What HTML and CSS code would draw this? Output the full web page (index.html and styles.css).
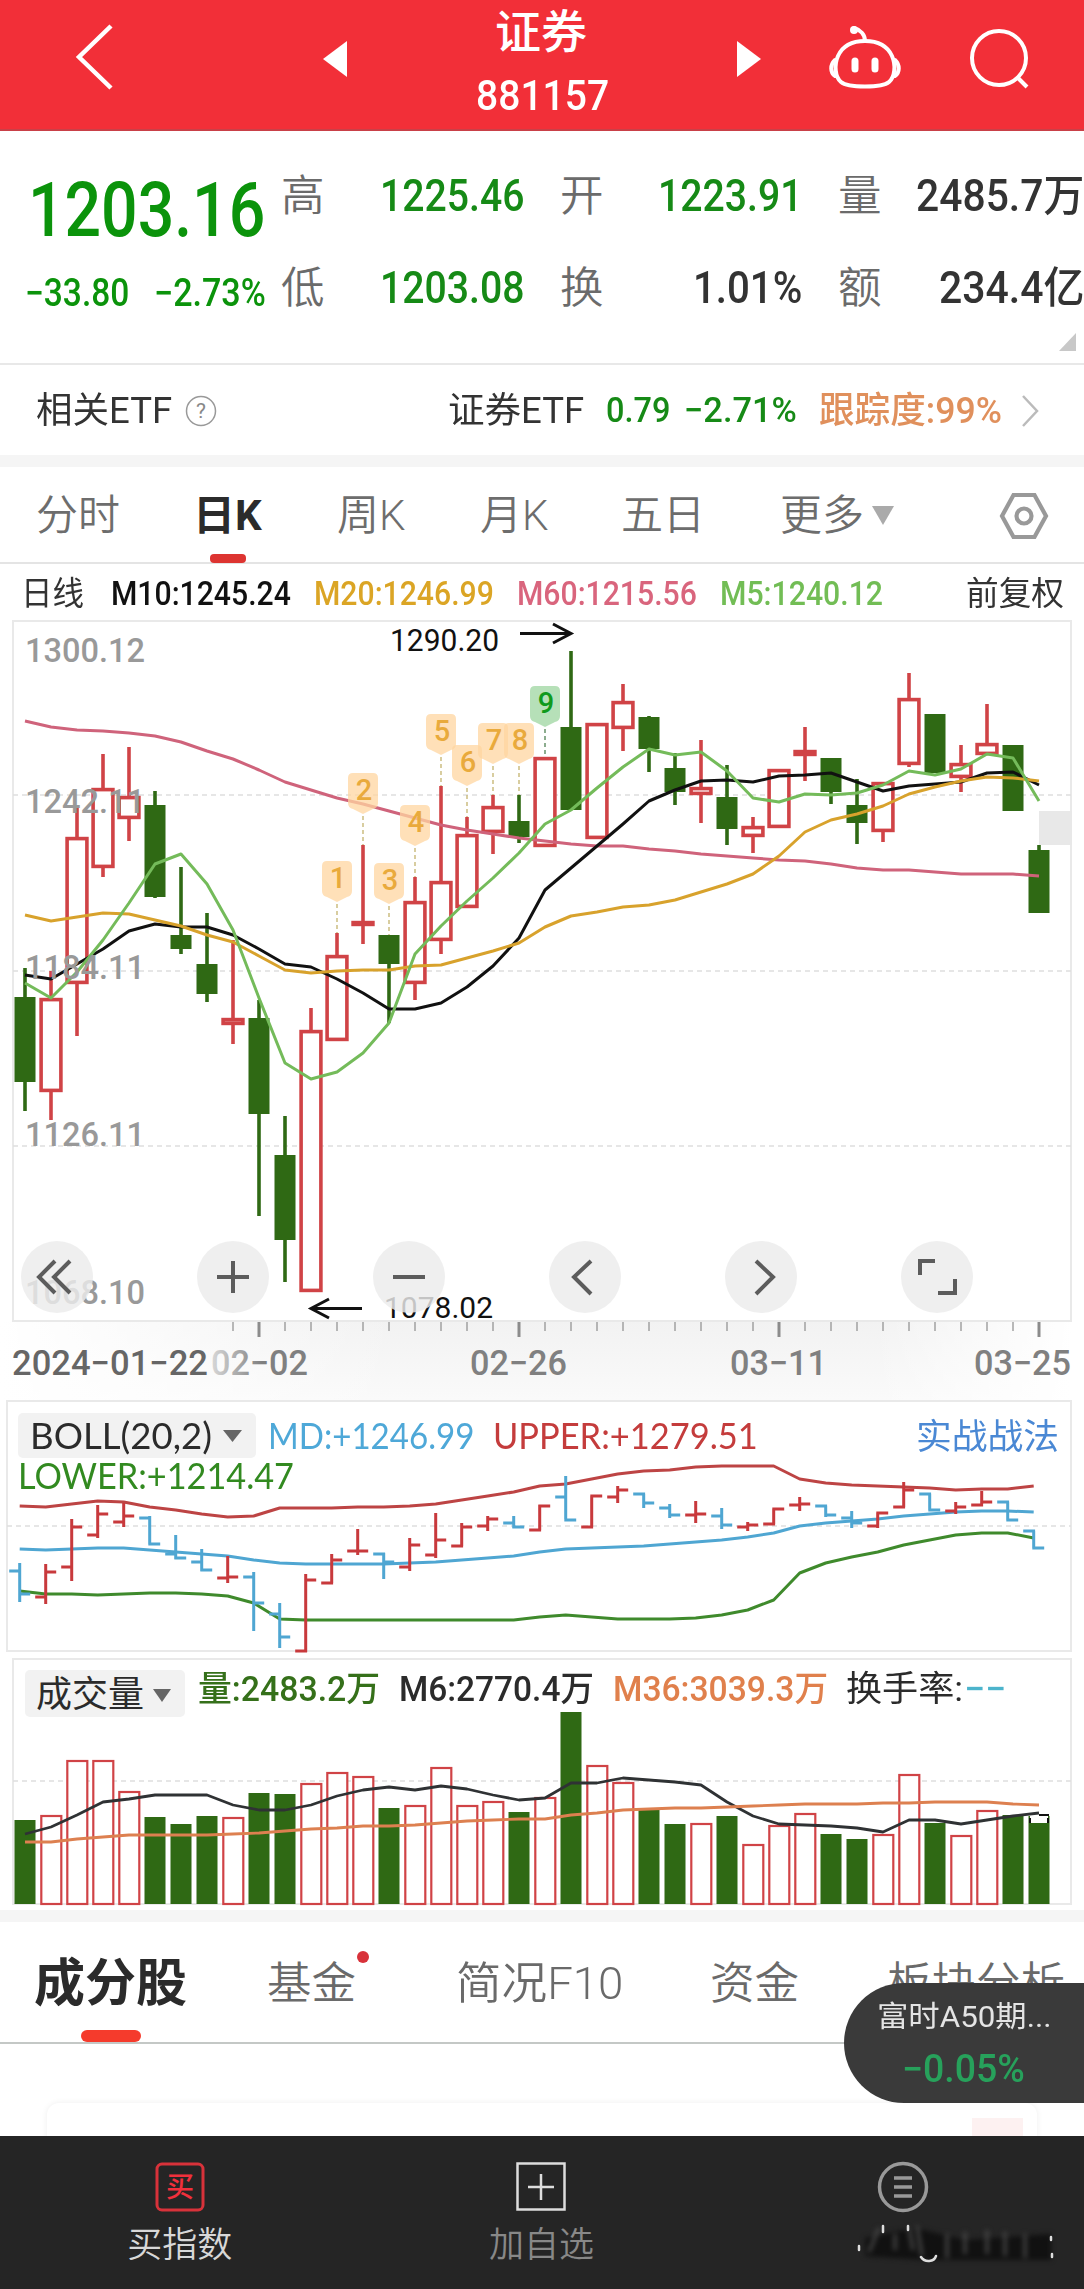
FILE: index.html
```html
<!DOCTYPE html>
<html lang="zh-CN">
<head>
<meta charset="utf-8">
<title>证券 881157</title>
<link rel="stylesheet" href="styles.css">
</head>
<body>
<header class="topbar">
  <svg class="ic-back" width="44" height="70" viewBox="0 0 44 70"><path d="M38 4 6 35 38 66" /></svg>
  <svg class="ic-prev" width="24" height="36" viewBox="0 0 24 36"><path d="M24 0V36L0 18z"/></svg>
  <div class="title">
    <div class="name fit" data-w="92">证券</div>
    <div class="code fit" data-w="133">881157</div>
  </div>
  <svg class="ic-next" width="24" height="36" viewBox="0 0 24 36"><path d="M0 0V36L24 18z"/></svg>
  <svg class="ic-bot" width="72" height="68" viewBox="0 0 72 68">
    <path d="M36 17C25 17 14 21 9 32 5 41 6 53 12 58 19 64 53 64 60 58 66 53 67 41 63 32 58 21 47 17 36 17z"/>
    <path d="M36 17C36 11 32 6 25 4M6 36C1 41 1 48 6 52M66 36C71 41 71 48 66 52"/>
    <path class="eyes" d="M26 37V45M46 37V45"/>
    <circle class="tip" cx="25" cy="6" r="4"/>
  </svg>
  <svg class="ic-search" width="64" height="64" viewBox="0 0 64 64"><circle cx="31" cy="31" r="27"/><path d="M50 51 59 60"/></svg>
</header>

<section class="quote">
  <div class="last">
    <div class="price fit" data-w="237">1203.16</div>
    <div class="chg"><span class="fit" data-w="104">−33.80</span><span class="fit" data-w="112">−2.73%</span></div>
  </div>
  <div class="stats">
    <span>高</span><b class="dn"><i class="fit" data-w="144">1225.46</i></b>
    <span>开</span><b class="dn"><i class="fit" data-w="144">1223.91</i></b>
    <span>量</span><b><i class="fit" data-w="168">2485.7万</i></b>
    <span>低</span><b class="dn"><i class="fit" data-w="144">1203.08</i></b>
    <span>换</span><b><i class="fit" data-w="109">1.01%</i></b>
    <span>额</span><b><i class="fit" data-w="145">234.4亿</i></b>
  </div>
  <svg class="fold" width="17" height="18" viewBox="0 0 17 18"><path d="M17 0V18H0z"/></svg>
</section>

<section class="etf">
  <span class="fit" data-w="136">相关ETF</span>
  <svg width="32" height="32" viewBox="0 0 32 32"><circle cx="16" cy="16" r="14.5"/><text x="16" y="23" text-anchor="middle">?</text></svg>
  <span class="fit" data-w="136">证券ETF</span>
  <b class="fit" data-w="64">0.79</b>
  <b class="fit" data-w="113">−2.71%</b>
  <em class="fit" data-w="183">跟踪度:99%</em>
  <svg class="go" width="20" height="34" viewBox="0 0 20 34"><path d="M3 2 17 17 3 32"/></svg>
</section>

<nav class="periods">
  <span>分时</span>
  <span class="on">日K</span>
  <span>周K</span>
  <span>月K</span>
  <span>五日</span>
  <span>更多</span>
  <svg class="more" width="22" height="19" viewBox="0 0 22 19"><path d="M0 0H22L11 19z"/></svg>
  <svg class="gear" width="50" height="48" viewBox="0 0 50 48"><path d="M14.500 3H35.500L47 24 35.500 45H14.500L3 24z"/><circle cx="25" cy="24" r="7.500"/></svg>
</nav>

<section class="ma">
  <span class="fit" data-w="63">日线</span>
  <span class="fit c10" data-w="180">M10:1245.24</span>
  <span class="fit c20" data-w="180">M20:1246.99</span>
  <span class="fit c60" data-w="180">M60:1215.56</span>
  <span class="fit c5" data-w="163">M5:1240.12</span>
  <span class="fit" data-w="98">前复权</span>
</section>

<section class="panel kline">
  <svg id="kline" width="1084" height="780" viewBox="0 620 1084 780"></svg>
  <div class="tools">
    <svg viewBox="0 0 72 72"><path d="M34 20 18 36 34 52M49 20 33 36 49 52"/></svg>
    <svg viewBox="0 0 72 72"><path d="M36 20V52M20 36H52"/></svg>
    <svg viewBox="0 0 72 72"><path d="M20 36H52"/></svg>
    <svg viewBox="0 0 72 72"><path d="M42 20 25 36 42 53"/></svg>
    <svg viewBox="0 0 72 72"><path d="M31 20 48 36 31 53"/></svg>
    <svg viewBox="0 0 72 72"><path d="M19 34V20H34M54 38V52H37"/></svg>
  </div>
</section>

<section class="panel">
  <svg id="boll" width="1084" height="256" viewBox="0 1400 1084 256"></svg>
  <div class="legend boll-legend">
    <div class="select"><span class="fit" data-w="182">BOLL(20,2)</span><svg width="19" height="12" viewBox="0 0 19 12"><path d="M0 0H19L9.500 12z"/></svg></div>
    <span class="fit md" data-w="206">MD:+1246.99</span>
    <span class="fit up" data-w="265">UPPER:+1279.51</span>
    <span class="fit tip" data-w="143">实战战法</span>
    <span class="fit low" data-w="276">LOWER:+1214.47</span>
  </div>
</section>

<section class="panel">
  <svg id="vol" width="1084" height="254" viewBox="0 1656 1084 254"></svg>
  <div class="legend vol-legend">
    <div class="select"><span class="fit" data-w="108">成交量</span><svg width="18" height="13" viewBox="0 0 18 13"><path d="M0 0H18L9 13z"/></svg></div>
    <span class="fit v" data-w="182">量:2483.2万</span>
    <span class="fit" data-w="195">M6:2770.4万</span>
    <span class="fit m36" data-w="215">M36:3039.3万</span>
    <span class="fit" data-w="117">换手率:</span>
    <span class="fit dash" data-w="42">−−</span>
  </div>
</section>

<nav class="sections">
  <span class="on">成分股</span>
  <span class="dot">基金</span>
  <span class="fit" data-w="167">简况F10</span>
  <span>资金</span>
  <span>板块分析</span>
</nav>

<section class="body"><div class="card"><i></i></div></section>

<aside class="float"><span class="fit" data-w="174">富时A50期...</span><b class="fit" data-w="123">−0.05%</b></aside>

<footer class="tabbar">
  <div class="buy"><svg width="50" height="52" viewBox="0 0 50 52"><rect x="2" y="3" width="46" height="46" rx="5"/><text x="25" y="36" text-anchor="middle">买</text></svg><span>买指数</span></div>
  <div class="add"><svg width="50" height="52" viewBox="0 0 50 52"><rect x="1.500" y="2.500" width="47" height="46"/><path d="M25 13V39M12 26H38"/></svg><span>加自选</span></div>
  <div class="fn"><svg width="52" height="52" viewBox="0 0 52 52"><circle cx="26" cy="26" r="23.500"/><path d="M17 17H35M17 26H35M17 35H35"/></svg>
    <svg class="smudge" width="206" height="50" viewBox="0 0 206 50">
      <g class="soft"><path class="k" d="M10 18 60 8 110 20 196 14V40H70L10 36z"/><path class="g" d="M14 32 24 8M54 8 58 30M62 6 67 36M40 14V30M92 14V38M132 10V34M150 12V36M170 14V38M110 12V34"/></g>
      <path class="w" d="M4 26V30M28 6V12M53 6V10M66 37C70 43 79 42 81 36M196 17V20M197 34V37"/>
    </svg></div>
</footer>
<script src="charts.js"></script>
</body>
</html>
```
FILE: styles.css
```css
* { box-sizing: border-box; }
body { margin: 0; width: 1084px; height: 2289px; overflow: hidden; position: relative; background: #fff; color: #333; font-family: Roboto, "Noto Sans CJK SC", sans-serif; }
b, i, em { font-weight: inherit; font-style: normal; }
svg { display: block; fill: none; }
.fit { display: inline-block; justify-self: start; white-space: nowrap; transform-origin: 0 50%; }

.topbar { height: 131px; background: #f22f38; border-bottom: 2px solid #c94048; display: grid; grid-template-columns: 324px 152px 133px 128px 94px 139px 1fr; position: relative; color: #fff; }
.topbar svg { stroke: #fff; grid-row: 1; }
.ic-back { grid-column: 1; margin: 22px 0 0 73px; stroke-width: 4.500; }
.topbar .ic-prev, .topbar .ic-next { fill: #fff; stroke: none; margin-top: 41px; }
.ic-prev { grid-column: 1 / 3; margin-left: 323px; }
.title { grid-column: 3; grid-row: 1; }
.name { font-size: 46px; line-height: 64px; font-weight: 500; margin-left: 19px; height: 64px; }
.code { font-size: 42px; line-height: 50px; font-weight: 500; margin-top: 7px; display: block; width: max-content; }
.ic-next { grid-column: 5; }
.ic-bot { grid-column: 5 / 7; margin: 24px 0 0 92px; stroke-width: 4; stroke-linecap: round; }
.eyes { stroke-width: 7; }
.tip { fill: #fff; stroke: none; }
.ic-search { grid-column: 7; margin: 27px 0 0 -2px; stroke-width: 4; }

.quote { height: 234px; border-bottom: 2px solid #e8e8e8; display: flex; position: relative; }
.last { width: 281px; color: #0b930b; padding: 35px 0 0 25px; }
.price { font-size: 76px; line-height: 88px; height: 88px; font-weight: 500; margin-left: 3px; }
.chg { display: grid; grid-template-columns: 129px auto; font-size: 38px; line-height: 50px; margin-top: 14px; font-weight: 500; }
.stats { display: grid; grid-template-columns: 42px 201px 78px 200px 79px 203px; grid-auto-rows: 92px; padding-top: 20px; font-size: 43.500px; line-height: 92px; }
.stats span { color: #6b6b6b; font-weight: 350; }
.stats span:not(:nth-child(6n+1)) { padding-left: 36px; }
.stats b { text-align: right; white-space: nowrap; font-weight: 500; }
.stats b .fit { transform-origin: 100% 50%; }
.stats .dn { color: #168a16; }
.fold { position: absolute; right: 8px; bottom: 12px; fill: #c8c8c8; }

.etf { height: 90px; display: grid; align-items: center; grid-template-columns: 149px 263px 158px 78px 135px 201px 1fr; padding: 1px 0 0 36px; font-size: 36px; line-height: 50px; }
.etf b { color: #168a16; font-weight: 500; font-size: 35px; }
.etf em { color: #e0905c; font-weight: 500; }
.etf svg { stroke: #999; stroke-width: 1.500; }
.etf text { font-size: 21px; fill: #888; stroke: none; }
.etf .go { stroke: #bbb; stroke-width: 2.500; }

.periods { height: 109px; border-top: 12px solid #f5f5f5; border-bottom: 2px solid #e4e4e4; display: grid; grid-template-columns: 157px 144px 143px 141px 159px 92px 127px 1fr; padding: 2px 0 0 36px; align-items: center; font-size: 42px; line-height: 60px; color: #6d6d6d; font-weight: 350; }
.periods .on { color: #2b2b2b; font-weight: 700; position: relative; }
.periods .on::after { content: ""; position: absolute; left: 17px; top: 68px; width: 36px; height: 9px; border-radius: 4px; background: #dd3431; }
.more { fill: #aaa; }
.gear { stroke: #999; stroke-width: 4.200; }

.ma { height: 56px; display: grid; grid-template-columns: 90px 203px 203px 203px 246px 1fr; padding-left: 21px; font-size: 33px; line-height: 60px; font-weight: 400; }
.c10 { color: #111; font-weight: 500; } .c20 { color: #dba525; font-weight: 500; } .c60 { color: #d9657d; font-weight: 500; } .c5 { color: #72bd55; font-weight: 500; }

.panel { position: relative; }
.kline svg { overflow: visible; }
.tools { position: absolute; left: 21px; top: 621px; display: flex; gap: 104px; }
.tools svg { width: 72px; height: 72px; border-radius: 50%; background: rgba(236,236,236,.82); stroke: #5c5c5c; stroke-width: 4; }
.legend { position: absolute; left: 0; top: 0; right: 0; display: grid; align-items: center; }
.boll-legend { grid-template-columns: 250px 225px 423px 1fr; grid-template-rows: 45px 30px; padding: 13px 0 0 18px; font-family: Lato, "Noto Sans CJK SC", sans-serif; font-size: 36px; line-height: 45px; }
.select { background: #f2f2f2; border-radius: 5px; display: flex; align-items: center; height: 100%; color: #2b2b2b; }
.select svg { fill: #666; }
.boll-legend .select { width: 238px; padding-left: 12px; gap: 11px; }
.md { color: #4ea8d8; } .up { color: #c43c3c; } .boll-legend .tip { color: #4a88d4; font-size: 35px; }
.low { color: #328a20; grid-row: 2; grid-column: 1 / 4; margin: 5px 0 0 0; }
.vol-legend { grid-template-columns: 173px 201px 214px 233px 118px 1fr; padding: 14px 0 0 25px; font-size: 35.500px; line-height: 47px; color: #2b2b2b; }
.vol-legend > span { margin-top: -9px; font-weight: 500; }
.vol-legend > span:nth-child(5) { font-weight: 400; }
.vol-legend .select { width: 160px; height: 47px; padding: 4px 0 0 11px; gap: 9px; font-size: 36px; }
.vol-legend .v { color: #35701a; } .vol-legend .m36 { color: #e0804c; } .vol-legend .dash { color: #4cb4cc; }

.sections { height: 134px; border-top: 12px solid #f5f5f5; border-bottom: 2px solid #c4c8c6; display: grid; grid-template-columns: 233px 189px 254px 177px 1fr; padding-left: 34px; font-size: 44.500px; line-height: 124px; color: #6a6a6a; font-weight: 350; white-space: nowrap; }
.sections .on { font-size: 51px; font-weight: 700; color: #2b2b2b; position: relative; }
.sections .on::after { content: ""; position: absolute; left: 47px; top: 108px; width: 60px; height: 12px; border-radius: 6px; background: #f53b2c; }
.dot { position: relative; }
.dot::after { content: ""; position: absolute; left: 90px; top: 29px; width: 12px; height: 12px; border-radius: 50%; background: #d8323a; }

.body { height: 92px; overflow: hidden; padding: 59px 47px 0; }
.card { height: 80px; border-radius: 12px; box-shadow: 0 0 6px rgba(0,0,0,.07); padding: 15px 14px 0; }
.card i { display: block; width: 51px; height: 40px; background: #fdf1f1; margin-left: auto; }
.float { position: absolute; right: 0; top: 1983px; width: 240px; height: 120px; border-radius: 60px 0 0 60px; background: #3a3a3a; color: #e4e4e4; display: grid; grid-template-rows: 66px 42px; font-size: 29px; line-height: 68px; padding-left: 33px; }
.float b { color: #27a15b; font-size: 38px; line-height: 40px; margin-left: 25px; font-weight: 500; }

.tabbar { height: 153px; background: #252525; display: grid; grid-template-columns: repeat(3, 1fr); position: relative; left: -1px; width: 1085px; }
.tabbar > div { display: flex; flex-direction: column; align-items: center; padding-top: 25px; font-size: 35px; line-height: 66px; color: #d8d8d8; font-weight: 350; }
.buy rect { stroke: #d8323a; stroke-width: 3; } .buy text { fill: #f0303c; font-size: 28px; font-weight: 500; }
.add rect, .add path { stroke: #ddd; stroke-width: 2.500; }
.tabbar .add { color: #888; }
.fn circle, .fn > svg:first-child path { stroke: #999; stroke-width: 3.500; }
.smudge { margin: 7px -110px 0 0; }
.soft { filter: blur(2.500px); } .k { fill: #111; } .g { stroke: #4a4a4a; stroke-width: 3; } .w { stroke: #ddd; stroke-width: 2.500; stroke-linecap: round; }

.lab { font-family: Roboto, sans-serif; }
```
FILE: charts.js
```js
// Squeeze each label to its column width.
document.querySelectorAll('.fit').forEach(el => {
  const w = +el.dataset.w, n = el.offsetWidth;
  el.style.transform = `scaleX(${w / n})`;
  if (!el.closest('.stats') && !el.closest('.title')) el.style.marginRight = `${w - n}px`;
});

const RED = '#d04346', GREEN = '#2f6914', BLUE = '#4fa6d2';
const X = i => 25 + 26 * i;
const XB = i => 19.7 + 26 * i;
const line = (x1, y1, x2, y2, c, w = 3, extra = '') => `<path d="M${x1} ${y1}L${x2} ${y2}" stroke="${c}" stroke-width="${w}" ${extra}/>`;
const poly = (ys, c, x = X, w = 3) => `<polyline points="${ys.map((y, i) => x(i) + ',' + y).join(' ')}" stroke="${c}" stroke-width="${w}" stroke-linejoin="round"/>`;
const text = (s, x, base, w, size, c, extra = '') => `<text class="lab" x="${x}" y="${base}" textLength="${w}" lengthAdjust="spacingAndGlyphs" font-size="${size}" fill="${c}" ${extra}>${s}</text>`;
const frame = (x, y, w, h) => `<rect x="${x}" y="${y}" width="${w}" height="${h}" fill="#fff" stroke="#e9e9e9" stroke-width="2"/>`;
const grid = (y, x = 13) => line(x, y, 1071, y, '#dedede', 1.3, 'stroke-dasharray="5 4"');
const medium = 'font-weight="500"';

// direction, high, body top, body bottom, low
const candles = [
  ['G',968,997,1082,1111],['R',971,998,1092,1120],['R',808,837,984,1036],['R',754,788,868,877],['R',747,796,819,841],
  ['G',791,805,897,898],['G',867,935,949,954],['G',913,964,994,1002],['R',940,1018,1025,1044],['G',1000,1018,1114,1216],
  ['G',1116,1155,1240,1282],['R',1008,1030,1292,1292],['R',933,955,1041,1041],['R',845,921,926,944],['G',935,935,964,1023],
  ['R',877,901,984,1000],['R',786,881,941,954],['R',817,834,908,908],['R',795,806,833,854],['G',795,821,837,843],
  ['R',757,757,847,847],['G',651,727,810,810],['R',723,723,839,839],['R',684,701,729,751],['G',716,717,749,772],
  ['G',753,768,792,805],['R',740,787,795,823],['G',765,797,829,845],['R',817,826,837,853],['R',769,769,828,828],
  ['R',727,750,756,781],['G',758,758,792,804],['G',779,805,823,844],['R',782,782,832,842],['R',673,698,765,767],
  ['G',714,714,773,773],['R',745,763,778,792],['R',704,743,755,755],['G',745,745,811,811],['G',845,850,913,913]];
const m60 = [721,727,730,731,733,736,742,751,759,770,782,790,798,804,811,818,825,830,834,838,841,844,846,846,849,851,854,856,858,860,861,864,868,870,870,872,874,874,874,876];
const m20 = [915,921,917,913,914,920,926,935,942,956,970,973,971,970,970,966,965,958,951,943,927,916,912,907,905,900,892,884,874,856,832,820,814,806,794,787,781,777,778,781];
const m10 = [975,979,964,949,931,924,927,927,935,949,964,967,979,993,1009,1009,1003,987,966,938,890,868,846,824,801,790,781,780,782,776,775,773,782,791,786,784,782,773,772,785];
const m5 = [983,998,972,940,903,864,854,884,930,998,1063,1079,1072,1053,1023,954,926,901,878,853,824,810,788,767,749,755,752,771,798,802,794,795,793,785,771,775,769,754,758,801];

let k = `<defs><linearGradient id="ax" x2="0" y2="1"><stop offset="0" stop-color="#f2f2f2"/><stop offset="1" stop-color="#fafafa"/></linearGradient>
<linearGradient id="axl"><stop offset="0" stop-color="#fff"/><stop offset="1" stop-color="#fff" stop-opacity="0"/></linearGradient>
<linearGradient id="axr"><stop offset="0" stop-color="#fff" stop-opacity="0"/><stop offset="1" stop-color="#fff"/></linearGradient>
<linearGradient id="fade" gradientUnits="userSpaceOnUse" x1="208" x2="262" y1="0" y2="0"><stop offset="0" stop-color="#ddd"/><stop offset="1" stop-color="#808080"/></linearGradient></defs>
<rect x="0" y="1321" width="1072" height="79" fill="url(#ax)"/><rect x="0" y="1321" width="400" height="79" fill="url(#axl)"/><rect x="872" y="1321" width="200" height="79" fill="url(#axr)"/>`;
k += frame(13, 621, 1058, 700) + grid(795) + grid(971) + grid(1146);
k += '<rect x="1039" y="811" width="33" height="34" fill="#e8e8e8"/>';
candles.forEach(([d, h, t, b, l], i) => {
  const x = X(i), c = d === 'R' ? RED : GREEN;
  k += line(x, h, x, t + 1, c, 3.6) + line(x, b - 1, x, l, c, 3.6);
  if (d === 'G') k += `<rect x="${x - 10.5}" y="${t}" width="21" height="${b - t}" fill="${c}"/>`;
  else k += `<rect x="${x - 9.9}" y="${t + 1.6}" width="19.8" height="${Math.max(b - t - 3.2, 1)}" fill="#fff" stroke="${c}" stroke-width="3.6"/>`;
});
k += poly(m60, '#cf637b') + poly(m10, '#111') + poly(m20, '#d8a22c') + poly(m5, '#74bb5a');
[['1300.12', 662], [1242.11, 813], [1184.11, 979], [1126.11, 1146], ['1068.10', 1304]].forEach(([v, y]) => k += text(v, 25, y, 120, 34, '#999', medium));
[861, 773, 863, 805, 714, 745, 723, 723, 686].forEach((y, n) => {
  const i = n + 12, x = X(i), g = n === 8;
  k += line(x, y + 43, x, candles[i][1], g ? '#5c8a60' : '#c8b878', 1.4, 'stroke-dasharray="4 3"');
  k += `<path d="M${x - 10} ${y}h20q5 0 5 5v25q0 5-5 6l-10 5-10-5q-5-1-5-6v-25q0-5 5-5z" fill="${g ? '#9ed6a0' : '#ffd6a0'}" opacity=".75"/>`;
  k += `<text class="lab" x="${x + 1}" y="${y + 27}" text-anchor="middle" font-size="29" font-weight="500" fill="${g ? '#109a1c' : '#e9aa3c'}">${n + 1}</text>`;
});
k += text('1290.20', 390, 651, 109, 31, '#111') + text('1078.02', 384, 1318, 109, 30, '#111');
k += '<path d="M520 633.500H570M553 624 571 633.500 553 643M362 1308.500H312M329 1299 311 1308.500 329 1318" stroke="#111" stroke-width="3"/>';
for (let i = 8; i < 40; i++) {
  const big = i % 10 === 9;
  k += line(X(i), 1322, X(i), big ? 1337 : 1331, '#8c8c8c', big ? 3 : 1.2);
}
k += text('2024−01−22', 12, 1375, 196, 35, '#666', medium) + text('02−02', 211, 1375, 97, 35, 'url(#fade)', medium);
k += text('02−26', 470, 1375, 97, 35, '#808080', medium) + text('03−11', 730, 1375, 97, 35, '#808080', medium) + text('03−25', 974, 1375, 97, 35, '#808080', medium);
document.getElementById('kline').innerHTML = k;

// direction, high, low, open, close
const bars = [
  ['B',1563,1602,1571,1594],['R',1564,1604,1597,1572],['R',1519,1581,1567,1527],['R',1505,1538,1535,1514],['R',1503,1527,1522,1516],
  ['B',1516,1544,1518,1544],['B',1535,1559,1554,1558],['B',1549,1571,1562,1570],['R',1556,1583,1578,1577],['B',1572,1631,1577,1603],
  ['B',1603,1648,1614,1637],['R',1574,1652,1651,1580],['R',1554,1583,1583,1560],['R',1529,1555,1551,1551],['B',1553,1579,1554,1562],
  ['R',1538,1571,1567,1545],['R',1513,1558,1555,1540],['R',1523,1546,1546,1527],['R',1516,1531,1526,1519],['B',1516,1528,1523,1527],
  ['R',1505,1530,1530,1506],['B',1476,1519,1497,1520],['R',1496,1527,1527,1496],['R',1486,1503,1497,1490],['B',1494,1508,1494,1503],
  ['B',1504,1518,1508,1515],['R',1501,1523,1515,1514],['B',1508,1529,1516,1525],['R',1522,1531,1527,1525],['R',1509,1524,1524,1509],
  ['R',1497,1511,1505,1504],['B',1506,1517,1506,1515],['B',1511,1528,1518,1523],['R',1513,1528,1526,1513],['R',1482,1507,1507,1490],
  ['B',1494,1510,1494,1510],['R',1502,1514,1511,1507],['R',1491,1504,1505,1502],['B',1502,1520,1502,1520],['B',1531,1548,1531,1548]];
const upper = [1506,1507,1504,1501,1502,1507,1510,1514,1517,1516,1508,1508,1508,1507,1507,1506,1504,1500,1496,1492,1486,1484,1479,1474,1471,1470,1467,1466,1466,1466,1479,1483,1485,1486,1487,1488,1490,1489,1489,1486];
const mid = [1549,1550,1549,1548,1548,1550,1552,1554,1556,1560,1563,1564,1564,1564,1564,1563,1562,1560,1558,1556,1552,1549,1548,1547,1546,1544,1542,1540,1537,1533,1526,1523,1521,1519,1516,1514,1512,1511,1511,1512];
const lower = [1591,1594,1594,1595,1594,1593,1593,1594,1596,1603,1619,1620,1620,1620,1620,1620,1620,1620,1620,1620,1617,1615,1617,1619,1619,1619,1618,1615,1610,1600,1573,1563,1557,1552,1545,1540,1535,1533,1533,1538];
let s = frame(7, 1401, 1064, 250) + grid(1526, 7) + poly(upper, '#bd4444', XB) + poly(mid, BLUE, XB) + poly(lower, '#3f8a2c', XB);
bars.forEach(([d, h, l, o, c], i) => {
  const x = XB(i);
  s += `<path d="M${x} ${h}V${l}M${x - 10.5} ${o}H${x + 1.4}M${x - 1.4} ${c}H${x + 10.5}" stroke="${d === 'R' ? '#c8393c' : BLUE}" stroke-width="3"/>`;
});
document.getElementById('boll').innerHTML = s;

const vols = 'G1820 R1815 R1760 R1760 R1791 G1817 G1824 G1816 R1817 G1793 G1794 R1783 R1772 R1776 G1808 R1805 R1767 R1805 R1801 G1812 R1797 G1712 R1765 R1782 G1810 G1824 R1823 G1816 R1844 R1825 R1813 G1834 G1839 R1834 R1774 G1823 R1835 R1810 G1815 G1816'.split(' ');
const v6 = [1834,1827,1815,1802,1799,1795,1795,1795,1805,1810,1810,1805,1796,1790,1787,1790,1786,1789,1795,1800,1798,1783,1783,1778,1780,1782,1785,1802,1816,1824,1825,1826,1828,1832,1820,1820,1824,1820,1816,1813];
const v36 = [1842,1842,1839,1837,1835,1835,1835,1835,1834,1833,1831,1829,1828,1826,1826,1825,1823,1821,1820,1819,1819,1815,1813,1810,1809,1808,1808,1807,1806,1805,1804,1804,1804,1803,1803,1802,1802,1802,1804,1805];
let v = frame(13, 1659, 1058, 245) + grid(1781);
vols.forEach((p, i) => {
  const t = +p.slice(1), x = X(i);
  v += p[0] === 'G' ? `<rect x="${x - 10.5}" y="${t}" width="21" height="${1904 - t}" fill="${GREEN}"/>`
    : `<rect x="${x - 9.7}" y="${t + 1}" width="20" height="${1903 - t}" fill="#fff" stroke="${RED}" stroke-width="2.2"/>`;
});
v += '<rect x="1030" y="1815" width="18" height="8" fill="#fff"/><path d="M1030 1823V1818M1048 1823V1818M1039 1815H1049" stroke="#111" stroke-width="2"/>';
v += poly(v6, '#2f3234', X, 2.8) + poly(v36, '#dd8050', X, 2.8);
document.getElementById('vol').innerHTML = v;
```
